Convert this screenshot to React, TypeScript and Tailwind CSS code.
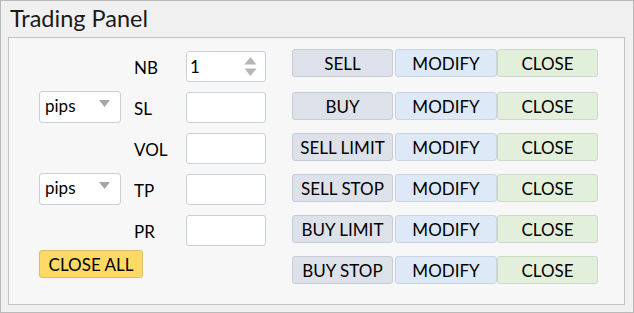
import React from 'react'

const font = { fontFamily: 'Lato, "Liberation Sans", sans-serif' }

const orders = ['SELL', 'BUY', 'SELL LIMIT', 'SELL STOP', 'BUY LIMIT', 'BUY STOP']
const fields = ['NB', 'SL', 'VOL', 'TP', 'PR']

function PipsSelect() {
  return (
    <div className="flex h-[32px] w-[82px] items-center justify-between rounded-[3px] border border-[#c8d0da] bg-white pl-[5px] pr-[10px] text-[17px] text-black">
      <span className="-mt-[2px]">pips</span>
      <svg width="11" height="8" viewBox="0 0 11 8" className="-mt-[6px]">
        <path d="M0 0 H11 L5.5 7 Z" fill="#a6a6a6" />
      </svg>
    </div>
  )
}

export default function App() {
  return (
    <div
      className="flex h-[313px] w-[634px] flex-col border border-[#b9b9b9] bg-[#f0f0f0] text-black"
      style={font}
    >
      <div className="h-[36px] pl-[9px] pt-[2px] text-[23.5px] leading-[30px] text-[#1a1a1a]">Trading Panel</div>

      <div className="mx-[7px] flex h-[268px] w-[617px] border border-[#c2c2c2] bg-[#f7f7f7]">
        {/* pips / close all */}
        <div className="ml-[30px] flex w-[95px] flex-col pt-[53px]">
          <PipsSelect />
          <div className="mt-[50px]">
            <PipsSelect />
          </div>
          <button className="mt-[45px] h-[28px] w-[104px] rounded-[3px] border border-[#d6c06a] bg-[#ffd966] text-[17px] leading-none text-black">
            CLOSE ALL
          </button>
        </div>

        {/* labels and inputs */}
        <div className="flex flex-col gap-[10px] pt-[13px]">
          {fields.map((f, i) => (
            <div key={f} className="flex h-[31px] items-center">
              <span className="mt-[2px] w-[52px] text-[17px]">{f}</span>
              <div className="flex h-[31px] w-[80px] items-center justify-between rounded-[3px] border border-[#c8d0da] bg-white pl-[3px] pr-[8px] text-[17px]">
                <span>{i === 0 ? '1' : ''}</span>
                {i === 0 && (
                  <svg width="13" height="22" viewBox="0 0 13 22">
                    <path d="M6.5 1 L12.5 8.5 H0.5 Z" fill="#b5b5b5" />
                    <path d="M0.5 12.5 H12.5 L6.5 20 Z" fill="#b5b5b5" />
                  </svg>
                )}
              </div>
            </div>
          ))}
        </div>

        {/* order buttons */}
        <div className="ml-[26px] flex flex-col gap-[13px] pt-[11px]">
          {orders.map((o, i) => (
            <div key={o} className={i === 1 ? 'mt-[2px] flex h-[28px]' : 'flex h-[28px]'}>
              <button className="mr-[2px] h-full w-[101px] rounded-[3px] border border-[#c6ccd5] bg-[#dde2ea] text-[17px] leading-none">
                {o}
              </button>
              <button className="h-full w-[102px] rounded-[3px] border border-[#c9d4e0] bg-[#dde9f6] text-[17px] leading-none">
                MODIFY
              </button>
              <button className="h-full w-[101px] rounded-[3px] border border-[#ccd8c8] bg-[#e2efda] text-[17px] leading-none">
                CLOSE
              </button>
            </div>
          ))}
        </div>
      </div>
    </div>
  )
}
